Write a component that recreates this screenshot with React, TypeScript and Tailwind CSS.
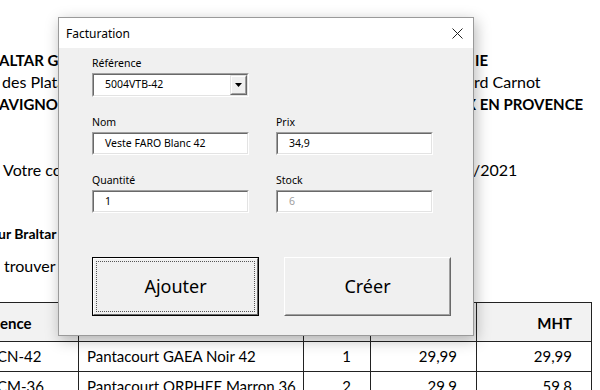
import React from "react";

function Sunken({ w, h, children }: { w: string; h: string; children?: React.ReactNode }) {
  return (
    <div className={`${w} ${h} border border-t-[#a0a0a0] border-l-[#a0a0a0] border-r-white border-b-white`}>
      <div className="h-full w-full border border-t-[#696969] border-l-[#696969] border-r-[#e3e3e3] border-b-[#e3e3e3] bg-white flex items-center">
        {children}
      </div>
    </div>
  );
}

function Label({ children }: { children: React.ReactNode }) {
  return <div className="h-[14px] leading-[14px] text-[10.5px] text-black mb-[3px]">{children}</div>;
}

export default function App() {
  const ui = "font-['Noto_Sans',sans-serif]";
  return (
    <div className="relative w-[600px] h-[390px] overflow-hidden bg-white font-['Lato',sans-serif] text-black">
      {/* Document behind */}
      <div className="pt-[49px]">
        <div className="grid grid-cols-[466px_1fr] text-[16px] leading-[22px] whitespace-nowrap">
          <div className="overflow-hidden">
            <div className="font-bold text-[15px] -ml-[1px]">ALTAR Gilles</div>
            <div className="ml-[2px]">des Platanes</div>
            <div className="font-bold text-[15px] -ml-[1px]">AVIGNON</div>
          </div>
          <div className="overflow-hidden">
            <div className="font-bold text-[15px] pl-[9px]">IE</div>
            <div className="pl-0">ard Carnot</div>
            <div className="font-bold text-[15px] pl-0">X EN PROVENCE</div>
          </div>
        </div>
        <div className="mt-[44px] grid grid-cols-[466px_1fr] text-[16px] leading-[22px] whitespace-nowrap">
          <div className="pl-[3px] overflow-hidden">Votre commande du 12/04/2021</div>
          <div className="pl-[7px] overflow-hidden">/2021</div>
        </div>
        <div className="mt-[43px] text-[14px] leading-[20px] font-bold whitespace-nowrap -ml-[2px]">ur Braltar Gilles</div>
        <div className="mt-[11px] text-[16px] leading-[22px] whitespace-nowrap pl-[4px]">trouver ci-dessous le détail</div>

        {/* Table */}
        <div className="mt-[25px] w-[592px] border-t border-[#222] text-[15px]">
          <div className="flex h-[39px] bg-[#f2f2f2] border-b border-[#222] font-bold">
            <div className="w-[79px] border-r border-[#222] flex items-center pt-[2px]">ence</div>
            <div className="w-[225px] border-r border-[#222] flex items-center pl-[8px] pt-[2px]">Désignation</div>
            <div className="w-[67px] border-r border-[#222] flex items-center justify-end pr-[19px] pt-[2px]">Qté</div>
            <div className="w-[106px] border-r border-[#222] flex items-center justify-end pr-[19px] pt-[2px]">PU</div>
            <div className="w-[115px] border-r border-[#222] flex items-center justify-end pr-[19px] pt-[2px]">MHT</div>
          </div>
          <div className="flex h-[30px] bg-white border-b border-[#222]">
            <div className="w-[79px] border-r border-[#222] flex items-center"><span className="-ml-[3px]">CN-42</span></div>
            <div className="w-[225px] border-r border-[#222] flex items-center pl-[8px]">Pantacourt GAEA Noir 42</div>
            <div className="w-[67px] border-r border-[#222] flex items-center justify-end pr-[19px]">1</div>
            <div className="w-[106px] border-r border-[#222] flex items-center justify-end pr-[19px]">29,99</div>
            <div className="w-[115px] border-r border-[#222] flex items-center justify-end pr-[19px]">29,99</div>
          </div>
          <div className="flex h-[30px] bg-white border-b border-[#222]">
            <div className="w-[79px] border-r border-[#222] flex items-center"><span className="-ml-[3px]">CM-36</span></div>
            <div className="w-[225px] border-r border-[#222] flex items-center pl-[8px]">Pantacourt ORPHEE Marron 36</div>
            <div className="w-[67px] border-r border-[#222] flex items-center justify-end pr-[19px]">2</div>
            <div className="w-[106px] border-r border-[#222] flex items-center justify-end pr-[19px]">29,9</div>
            <div className="w-[115px] border-r border-[#222] flex items-center justify-end pr-[19px]">59,8</div>
          </div>
        </div>
      </div>

      {/* Dialog */}
      <div className={`absolute left-[58px] top-[17px] w-[416px] h-[319px] border border-[#9a9a9a] bg-[#f0f0f0] flex flex-col shadow-[2px_4px_14px_rgba(0,0,0,0.28)] ${ui}`}>
        <div className="h-[30px] bg-white flex items-center justify-between pl-[7px] pr-[10px] shrink-0">
          <span className="text-[12px] leading-[16px] text-black pt-[1px]">Facturation</span>
          <svg width="11" height="11" viewBox="0 0 11 11" className="text-[#222]">
            <path d="M0.5 0.5 L10.5 10.5 M10.5 0.5 L0.5 10.5" stroke="currentColor" strokeWidth="1" fill="none" />
          </svg>
        </div>
        <div className="flex-1 pl-[33px] pt-[8px]">
          <Label>Référence</Label>
          <Sunken w="w-[157px]" h="h-[24px]">
            <span className="flex-1 pl-[11px] text-[10.5px]">5004VTB-42</span>
            <div className="w-[17px] h-full border border-t-[#e3e3e3] border-l-[#e3e3e3] border-r-[#696969] border-b-[#696969] bg-[#f0f0f0]">
              <div className="w-full h-full border border-t-white border-l-white border-r-[#a0a0a0] border-b-[#a0a0a0] flex items-center justify-center">
                <svg width="7" height="4" viewBox="0 0 7 4">
                  <path d="M0 0 H7 L3.5 4 Z" fill="#000" />
                </svg>
              </div>
            </div>
          </Sunken>

          <div className="flex gap-[27px] mt-[18px]">
            <div>
              <Label>Nom</Label>
              <Sunken w="w-[157px]" h="h-[23px]">
                <span className="pl-[11px] text-[10.5px]">Veste FARO Blanc 42</span>
              </Sunken>
            </div>
            <div>
              <Label>Prix</Label>
              <Sunken w="w-[157px]" h="h-[23px]">
                <span className="pl-[11px] text-[10.5px]">34,9</span>
              </Sunken>
            </div>
          </div>

          <div className="flex gap-[27px] mt-[18px]">
            <div>
              <Label>Quantité</Label>
              <Sunken w="w-[157px]" h="h-[23px]">
                <span className="pl-[11px] text-[10.5px]">1</span>
              </Sunken>
            </div>
            <div>
              <Label>Stock</Label>
              <Sunken w="w-[157px]" h="h-[23px]">
                <span className="pl-[11px] text-[10.5px] text-[#a0a0a0]">6</span>
              </Sunken>
            </div>
          </div>

          <div className="flex gap-[25px] mt-[44px]">
            <div className="w-[167px] h-[59px] border border-black">
              <div className="w-full h-full border border-t-white border-l-white border-r-[#696969] border-b-[#696969] bg-[#f0f0f0] p-[2px]">
                <div className="w-full h-full border border-dotted border-[#555] flex items-center justify-center text-[18px] text-black">
                  Ajouter
                </div>
              </div>
            </div>
            <div className="w-[167px] h-[59px] border border-t-white border-l-white border-r-[#696969] border-b-[#696969] bg-[#f0f0f0]">
              <div className="w-full h-full border border-t-[#f0f0f0] border-l-[#f0f0f0] border-r-[#a0a0a0] border-b-[#a0a0a0] flex items-center justify-center text-[18px] text-black">
                Créer
              </div>
            </div>
          </div>
        </div>
      </div>
    </div>
  );
}
